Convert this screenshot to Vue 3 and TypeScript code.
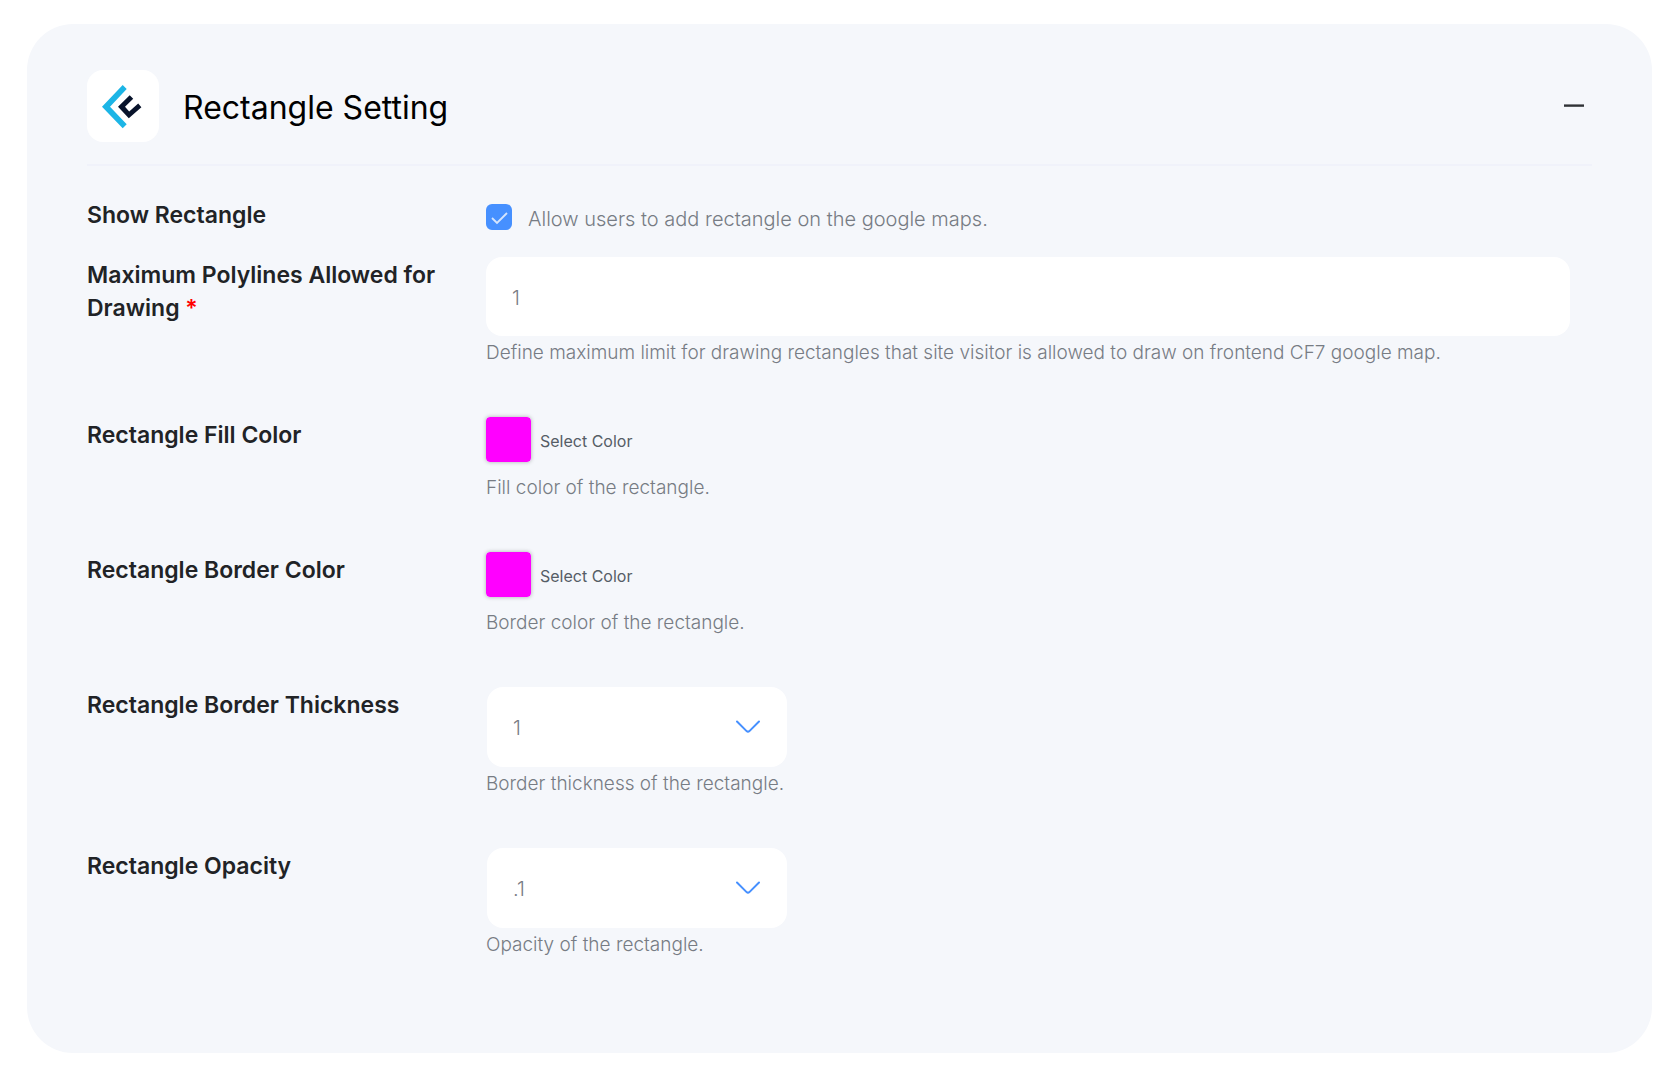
<script setup lang="ts">
import { ref } from 'vue'

interface ColorField {
  kind: 'color'
  id: string
  label: string
  help: string
  value: string
}
interface SelectField {
  kind: 'select'
  id: string
  label: string
  help: string
  value: string
  options: string[]
}

const open = ref(true)
const showRectangle = ref(true)
const maxAllowed = ref('1')

const fields = ref<(ColorField | SelectField)[]>([
  { kind: 'color', id: 'fill-color', label: 'Rectangle Fill Color', help: 'Fill color of the rectangle.', value: '#ff00ff' },
  { kind: 'color', id: 'border-color', label: 'Rectangle Border Color', help: 'Border color of the rectangle.', value: '#ff00ff' },
  { kind: 'select', id: 'border-thickness', label: 'Rectangle Border Thickness', help: 'Border thickness of the rectangle.', value: '1', options: ['1', '2', '3', '4', '5'] },
  { kind: 'select', id: 'opacity', label: 'Rectangle Opacity', help: 'Opacity of the rectangle.', value: '.1', options: ['.1', '.2', '.3', '.4', '.5', '.6', '.7', '.8', '.9', '1'] },
])
</script>

<template>
  <main class="card">
    <header class="head">
      <span class="logo">
        <svg width="44" height="46" viewBox="0 0 44 46" aria-hidden="true">
          <path d="M21.7 2 25.7 6 9 23.7 25.7 41.3 21.7 45.3 1 23.7Z" fill="#1cb5e6" />
          <path d="M28.7 12.3 32.2 15.8 24 23.8 28.2 28.6 37.2 20.6 40.4 24.2 27.8 35.2 17 23.7Z" fill="#08132b" />
        </svg>
      </span>
      <h1>Rectangle Setting</h1>
      <button class="toggle" type="button" :aria-expanded="open" aria-label="Toggle section" @click="open = !open">
        <svg width="20" height="4" viewBox="0 0 20 4" aria-hidden="true">
          <path d="M0 1.6H20" stroke="#303236" stroke-width="2.4" />
        </svg>
      </button>
    </header>

    <form v-show="open" class="form" @submit.prevent>
      <div class="row row-check">
        <label class="name" for="show-rectangle">Show Rectangle</label>
        <div class="check">
          <input id="show-rectangle" v-model="showRectangle" type="checkbox" />
          <label for="show-rectangle">Allow users to add rectangle on the google maps.</label>
        </div>
      </div>

      <div class="row">
        <label class="name" for="max-allowed">Maximum Polylines Allowed for Drawing <span class="req">*</span></label>
        <div class="control">
          <input id="max-allowed" v-model="maxAllowed" class="text" type="text" />
          <p class="help">Define maximum limit for drawing rectangles that site visitor is allowed to draw on frontend CF7 google map.</p>
        </div>
      </div>

      <div v-for="field in fields" :key="field.id" class="row">
        <label class="name" :for="field.id">{{ field.label }}</label>
        <div class="control">
          <div v-if="field.kind === 'color'" class="color">
            <input :id="field.id" v-model="field.value" type="color" />
            <label :for="field.id">Select Color</label>
          </div>
          <div v-else class="select">
            <select :id="field.id" v-model="field.value">
              <option v-for="option in field.options" :key="option" :value="option">{{ option }}</option>
            </select>
            <svg width="24" height="14" viewBox="0 0 24 14" aria-hidden="true">
              <path d="M1 1.5 10.6 11.1Q12 12.4 13.4 11.1L23 1.5" fill="none" stroke="#4690ff" stroke-width="2" stroke-linecap="round" />
            </svg>
          </div>
          <p class="help">{{ field.help }}</p>
        </div>
      </div>
    </form>
  </main>
</template>

<style>
body {
  background: #fff;
}
</style>

<style scoped>
.card,
.card * {
  box-sizing: border-box;
}
.card {
  margin: 24px 19px 22px 27px;
  padding: 46px 60px 44px;
  border-radius: 46px;
  background: #f5f7fb;
  color: #777c84;
  font-family: Inter, "Liberation Sans", sans-serif;
  font-size: 20px;
  font-weight: 300;
}
.head {
  display: flex;
  align-items: center;
  padding-bottom: 22px;
  border-bottom: 2px solid #f0f2fa;
}
.logo {
  display: flex;
  align-items: center;
  justify-content: center;
  width: 72px;
  height: 72px;
  border-radius: 16px;
  background: #fff;
}
h1 {
  flex: 1;
  margin: 0 0 0 24px;
  padding-top: 3px;
  color: #000;
  font-size: 32px;
  font-weight: 400;
  line-height: 40px;
}
.toggle {
  display: flex;
  padding: 8px;
  border: 0;
  background: none;
}
.form {
  padding: 31px 22px 0 0;
}
.row {
  display: grid;
  grid-template-columns: 399px 1fr;
  margin-bottom: 48px;
}
.row-check {
  margin-bottom: 25px;
}
.name {
  padding: 2px 40px 0 0;
  color: #212326;
  font-size: 23px;
  font-weight: 600;
  line-height: 33px;
}
.req {
  color: #f00;
}
.check {
  display: flex;
  align-items: center;
  gap: 16px;
  padding-top: 5px;
}
.check label {
  padding-top: 4px;
}
.check input {
  appearance: none;
  width: 26px;
  height: 26px;
  margin: 0;
  border-radius: 6px;
  background: #4690ff;
}
.check input:checked {
  background: #4690ff url("data:image/svg+xml,%3Csvg xmlns='http://www.w3.org/2000/svg' viewBox='0 0 26 26'%3E%3Cpath d='M6 14l5 5L21 9' fill='none' stroke='%23d5e5fd' stroke-width='1.8'/%3E%3C/svg%3E") center / 26px no-repeat;
}
.text,
select {
  display: block;
  width: 100%;
  height: 80px;
  padding: 2px 26px 0;
  border: 0;
  border-radius: 16px;
  background: #fff;
  color: inherit;
  font: inherit;
}
.text {
  height: 79px;
}
select {
  appearance: none;
}
.select {
  position: relative;
  width: 300px;
  margin-left: 1px;
}
.select svg {
  position: absolute;
  top: 33px;
  right: 27px;
  pointer-events: none;
}
.color {
  display: flex;
  align-items: center;
  gap: 9px;
  margin-bottom: 9px;
  color: #555d66;
  font-size: 16px;
  font-weight: 400;
}
.color label {
  padding-top: 2px;
}
.color input {
  appearance: none;
  width: 45px;
  height: 45px;
  padding: 0;
  border: 0;
  border-radius: 4px;
  background: none;
  box-shadow: 0 0 4px rgba(0, 0, 0, 0.3);
}
.color input::-webkit-color-swatch-wrapper {
  padding: 0;
}
.color input::-webkit-color-swatch {
  border: 0;
  border-radius: 4px;
}
.help {
  margin: 0;
  font-size: 19px;
  line-height: 33px;
}
</style>
